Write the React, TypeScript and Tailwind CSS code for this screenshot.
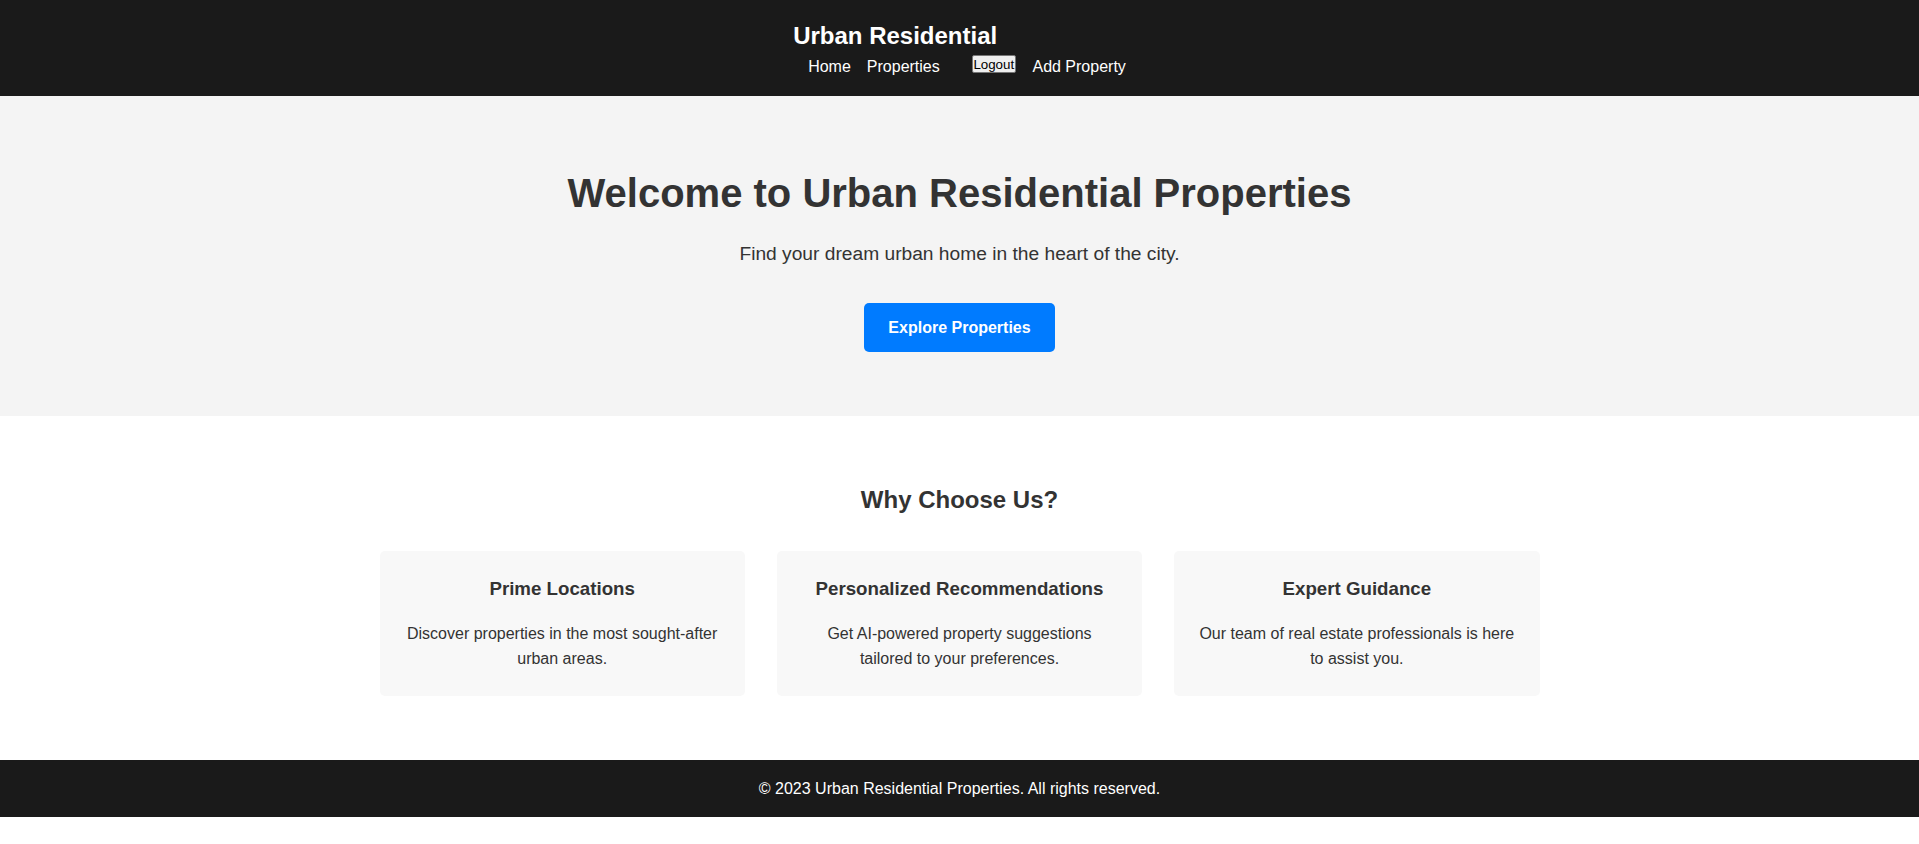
export default function App() {
  const features = [
    {
      title: "Prime Locations",
      text: "Discover properties in the most sought-after urban areas.",
    },
    {
      title: "Personalized Recommendations",
      text: "Get AI-powered property suggestions tailored to your preferences.",
    },
    {
      title: "Expert Guidance",
      text: "Our team of real estate professionals is here to assist you.",
    },
  ];

  return (
    <div
      className="bg-white text-[#333] text-[16px]"
      style={{ fontFamily: '"Liberation Sans", Arial, Helvetica, sans-serif' }}
    >
      <header className="bg-[#1a1a1a] text-white pt-[22px] pb-[17px]">
        <div className="flex justify-center">
          <div className="w-fit">
            <h1 className="text-[24px] leading-[28px] font-bold">Urban Residential</h1>
            <nav className="mt-[4px] pl-[15px]">
              <ul className="flex items-start">
                <li className="leading-[25px]">
                  <a href="#">Home</a>
                </li>
                <li className="leading-[25px] ml-4">
                  <a href="#">Properties</a>
                </li>
                <li className="ml-8 pt-px">
                  <button className="flex items-center justify-center w-[44px] h-[18px] pt-px text-[13.33px] leading-none text-black bg-[#efefef] border border-[#767676] rounded-[2px]">
                    Logout
                  </button>
                </li>
                <li className="leading-[25px] ml-[16.7px]">
                  <a href="#">Add Property</a>
                </li>
              </ul>
            </nav>
          </div>
        </div>
      </header>

      <section className="bg-[#f4f4f4] pt-[74px] pb-[64px] flex flex-col items-center text-center">
        <h2 className="text-[40px] leading-[46px] font-bold text-[#333]">
          Welcome to Urban Residential Properties
        </h2>
        <p className="mt-[27px] text-[19.2px] leading-[22px] text-[#333]">
          Find your dream urban home in the heart of the city.
        </p>
        <a
          href="#"
          className="mt-[38px] h-[49px] px-6 flex items-center justify-center bg-[#007bff] text-white font-bold text-[16px] rounded-[5px]"
        >
          Explore Properties
        </a>
      </section>

      <section className="pt-[70px] pb-[64px]">
        <h2 className="text-center text-[24px] leading-[28px] font-bold text-[#333]">
          Why Choose Us?
        </h2>
        <div className="mt-[37px] max-w-[1200px] mx-auto px-5 grid grid-cols-3 gap-8">
          {features.map((f) => (
            <div
              key={f.title}
              className="bg-[#f8f8f8] rounded-[5px] pt-6 pb-[25px] px-6 text-center"
            >
              <h3 className="text-[18.72px] leading-[28px] font-bold text-[#333]">{f.title}</h3>
              <p className="mt-[18px] text-[16px] leading-[25px] text-[#333]">{f.text}</p>
            </div>
          ))}
        </div>
      </section>

      <footer className="bg-[#1a1a1a] text-white h-[57px] flex items-center justify-center text-[16px]">
        <p>© 2023 Urban Residential Properties. All rights reserved.</p>
      </footer>
    </div>
  );
}
